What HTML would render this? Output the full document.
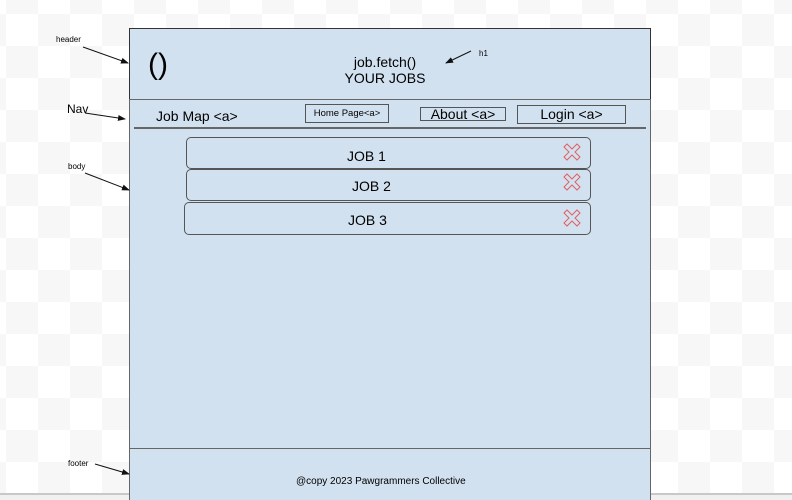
<!DOCTYPE html>
<html><head><style>
html,body{margin:0;width:792px;height:500px;overflow:hidden}
body{position:relative;font-family:"Liberation Sans",sans-serif;
background-color:#fff;
background-image:linear-gradient(45deg,#f7f7f7 25%,transparent 25%,transparent 75%,#f7f7f7 75%),linear-gradient(45deg,#f7f7f7 25%,transparent 25%,transparent 75%,#f7f7f7 75%);
background-size:64px 64px;background-position:6px 14px,38px 46px;}
.a{position:absolute}
.box{position:absolute;background:#d2e1f0;border:1px solid #666;box-sizing:border-box}
.t{position:absolute;white-space:nowrap;color:#000}
.btn{position:absolute;border:1.5px solid #555;box-sizing:border-box;text-align:center;color:#000}
.job{position:absolute;border:1px solid #555;border-radius:5px;box-sizing:border-box;font-size:14px;color:#000}
</style></head><body>
<div class="a" style="left:0;top:493px;width:792px;height:2px;background:#c8c8c8"></div>
<div class="a" style="left:0;top:495px;width:792px;height:5px;background:#f0f0f0"></div>
<div class="box" style="left:129px;top:28px;width:522px;height:72px;border-color:#333"></div>
<div class="box" style="left:129px;top:99px;width:522px;height:350px"></div>
<div class="box" style="left:129px;top:448px;width:522px;height:52px;border-bottom:none"></div>
<div class="a" style="left:134px;top:127px;width:512px;height:1.5px;background:#666"></div>
<div class="t" style="left:148px;top:48px;font-size:30px;font-weight:300">()</div>
<div class="t" style="left:340px;top:54px;width:90px;text-align:center;font-size:14px;line-height:16px">job.fetch()<br>YOUR JOBS</div>
<div class="t" style="left:479px;top:49px;font-size:8px">h1</div>
<div class="t" style="left:56px;top:35px;font-size:8px">header</div>
<div class="t" style="left:67px;top:102px;font-size:12px">Nav</div>
<div class="t" style="left:68px;top:162px;font-size:8px">body</div>
<div class="t" style="left:68px;top:459px;font-size:8px">footer</div>
<svg class="a" style="left:0;top:0" width="792" height="500">
<defs><marker id="m" markerWidth="8" markerHeight="8" refX="7" refY="4" orient="auto"><path d="M0,1 L8,4 L0,7 z" fill="#111"/></marker></defs>
<g stroke="#111" stroke-width="1" fill="none" marker-end="url(#m)">
<line x1="83" y1="47" x2="128" y2="63"/>
<line x1="85" y1="113" x2="125" y2="119"/>
<line x1="85" y1="173" x2="129" y2="190"/>
<line x1="95" y1="464" x2="129" y2="474"/>
<line x1="471" y1="51" x2="446" y2="63"/>
</g>
<g fill="none" stroke="#e06060" stroke-width="1">
<path id="x" d="M564,147 l3,-3 l5,5 l5,-5 l3,3 l-5,5 l5,5 l-3,3 l-5,-5 l-5,5 l-3,-3 l5,-5 z"/>
<use href="#x" y="30"/><use href="#x" y="66"/>
</g>
</svg>
<div class="t" style="left:156px;top:108px;font-size:14px">Job Map &lt;a&gt;</div>
<div class="btn" style="left:305px;top:104px;width:84px;height:19px;font-size:9.5px;line-height:17px">Home Page&lt;a&gt;</div>
<div class="btn" style="left:420px;top:107px;width:86px;height:14px;font-size:14px;line-height:12px">About &lt;a&gt;</div>
<div class="btn" style="left:517px;top:105px;width:109px;height:19px;font-size:14px;line-height:17px">Login &lt;a&gt;</div>
<div class="job" style="left:186px;top:137px;width:405px;height:32px"><span class="t" style="left:160px;top:10px">JOB 1</span></div>
<div class="job" style="left:186px;top:169px;width:405px;height:32px"><span class="t" style="left:165px;top:8px">JOB 2</span></div>
<div class="job" style="left:184px;top:202px;width:407px;height:33px"><span class="t" style="left:163px;top:9px">JOB 3</span></div>
<div class="t" style="left:296px;top:476px;font-size:10px">@copy 2023 Pawgrammers Collective</div>
</body></html>
